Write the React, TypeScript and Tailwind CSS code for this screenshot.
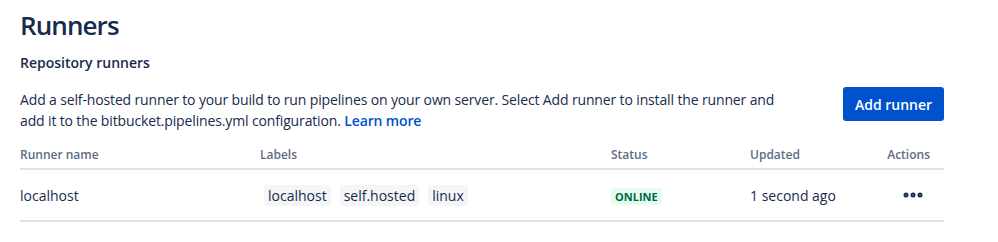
import { MoreHorizontal } from "lucide-react";

const labels = ["localhost", "self.hosted", "linux"];

export default function App() {
  return (
    <div className="h-[242px] w-[998px] bg-white px-5 pt-[4px] text-[#172b4d] [font-family:'Open_Sans',sans-serif]">
      <h1 className="pt-[1px] text-[26px] font-semibold leading-[40px] tracking-[-0.035em]">Runners</h1>

      <h2 className="mt-[8px] text-[14px] font-semibold leading-5">Repository runners</h2>

      <div className="mt-[16px] flex w-[924px] items-start justify-between">
        <p className="w-[770px] text-[14px] leading-[21px] tracking-[-0.01em]">
          Add a self-hosted runner to your build to run pipelines on your own server. Select Add runner to install the
          runner and add it to the bitbucket.pipelines.yml configuration.{" "}
          <a href="#" className="font-semibold text-[#0052cc]">
            Learn more
          </a>
        </p>
        <button className="-mt-[2px] h-[34px] w-[101px] shrink-0 rounded-[3px] bg-[#0052cc] text-[14px] font-semibold text-white">
          Add runner
        </button>
      </div>

      <div className="mt-[14px] w-[924px]">
        <div className="grid grid-cols-[240px_351px_139px_1fr_80px] border-b-2 border-[#dfe1e6] pb-[3px] text-[12px] font-semibold leading-5 text-[#5e6c84]">
          <div>Runner name</div>
          <div>Labels</div>
          <div>Status</div>
          <div>Updated</div>
          <div className="pr-[14px] text-right">Actions</div>
        </div>

        <div className="grid h-[52px] grid-cols-[240px_351px_139px_1fr_80px] items-center border-b-2 border-[#dfe1e6] text-[14px]">
          <div>localhost</div>
          <div className="flex gap-[9px] pl-[4px]">
            {labels.map((l) => (
              <span key={l} className="rounded-[3px] bg-[#f4f5f7] px-[4px] leading-[21px]">
                {l}
              </span>
            ))}
          </div>
          <div>
            <span className="rounded-[3px] bg-[#e3fcef] px-[4px] py-[1px] text-[11px] font-bold leading-[14px] text-[#006644]">
              ONLINE
            </span>
          </div>
          <div>1 second ago</div>
          <div className="flex justify-end pr-[19px]">
            <MoreHorizontal className="h-6 w-6 text-[#172b4d]" strokeWidth={3} />
          </div>
        </div>
      </div>
    </div>
  );
}
